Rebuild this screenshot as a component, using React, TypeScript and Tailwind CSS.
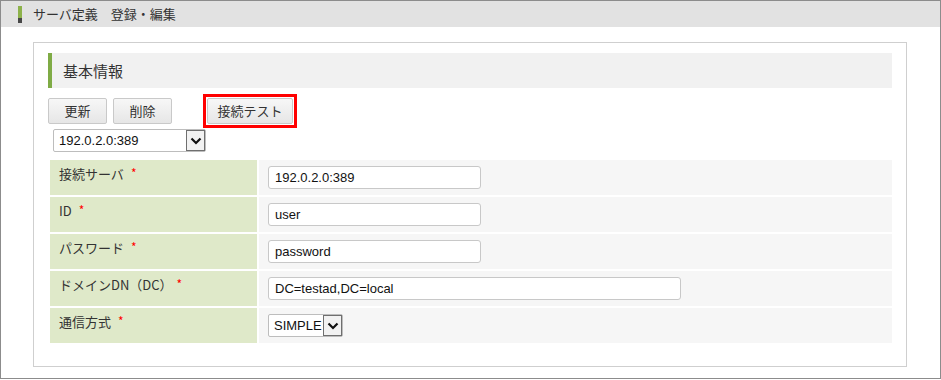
import React from "react";

const jp = "font-['Noto_Sans_CJK_JP','Noto_Sans',sans-serif]";
const ar = "font-['Liberation_Sans',Arial,sans-serif]";

function Chevron() {
  return (
    <svg width="12" height="8" viewBox="0 0 12 8">
      <path d="M1.5 1.5 L6 6 L10.5 1.5" fill="none" stroke="#111" strokeWidth="2.2" />
    </svg>
  );
}

function FakeSelect({ value, w }: { value: string; w: string }) {
  return (
    <div className={`${w} h-[23px] flex bg-white border border-[#bdbdbd] rounded-[2px]`}>
      <div className={`flex-1 flex items-center pl-[5px] text-[13px] text-[#111] ${ar}`}>{value}</div>
      <div className="w-[19px] h-full border border-[#6f6f6f] bg-[#f2f2f2] flex items-center justify-center">
        <Chevron />
      </div>
    </div>
  );
}

function Btn({ label }: { label: string }) {
  return (
    <div
      className={`h-[26px] flex items-center justify-center border border-[#c9c9c9] rounded-[2px] bg-[linear-gradient(#f7f7f7,#e6e6e6)] text-[13px] text-[#333] ${jp}`}
    >
      {label}
    </div>
  );
}

function Row({ label, children, extra }: { label: string; children: React.ReactNode; extra?: string }) {
  return (
    <div className="h-[35px] flex gap-[2px]">
      <div className={`w-[207px] bg-[#dfe9c9] pl-[9px] pt-[5px] text-[13px] leading-[18px] text-[#333] ${jp}`}>
        {label}
        <span className={`text-[#ff0000] text-[12px] relative -top-[1px] ${extra ?? "ml-[7px]"}`}>*</span>
      </div>
      <div className="flex-1 bg-[#f6f6f6] flex items-center pl-[9px]">{children}</div>
    </div>
  );
}

function Input({ value, w }: { value: string; w: string }) {
  return (
    <div
      className={`${w} h-[23px] flex items-center pl-[6px] bg-white border border-[#c8c8c8] rounded-[3px] text-[13px] text-[#111] ${ar}`}
    >
      {value}
    </div>
  );
}

export default function App() {
  return (
    <div className="w-[941px] h-[380px] bg-white">
      <div className="w-[941px] h-[379px] border border-[#8c8c8c] flex flex-col">
        <div className="h-[26px] bg-[#e2e2e2] flex items-center pl-[17px]">
          <div className="flex flex-col w-[4px]">
            <div className="h-[12px] bg-[#8db24a]" />
            <div className="h-[5px] bg-[#474747]" />
          </div>
          <div className={`ml-[11px] text-[13px] text-[#333] leading-[18px] ${jp}`}>サーバ定義　登録・編集</div>
        </div>
        <div className="ml-[32px] mt-[15px] w-[874px] h-[325px] border border-[#cfcfcf] px-[14px] pt-[10px]">
          <div className="h-[35px] bg-[#f1f1f1] flex items-center">
            <div className="w-[4px] h-full bg-[#7fab45]" />
            <div className={`ml-[11px] text-[15px] text-[#333] leading-[20px] ${jp}`}>基本情報</div>
          </div>
          <div className="mt-[6px] h-[34px] flex items-center">
            <div className="w-[59px]">
              <Btn label="更新" />
            </div>
            <div className="w-[59px] ml-[6px]">
              <Btn label="削除" />
            </div>
            <div className="ml-[31px] w-[94px] h-[34px] border-[3px] border-[#ff0000] p-[1px] flex items-center">
              <div className="w-full">
                <Btn label="接続テスト" />
              </div>
            </div>
          </div>
          <div className="mt-[1px] ml-[5px]">
            <FakeSelect value="192.0.2.0:389" w="w-[153px]" />
          </div>
          <div className="mt-[8px] ml-[2px] w-[842px] flex flex-col gap-[2px]">
            <Row label="接続サーバ">
              <Input value="192.0.2.0:389" w="w-[213px]" />
            </Row>
            <Row label="ID">
              <Input value="user" w="w-[213px]" />
            </Row>
            <Row label="パスワード">
              <Input value="password" w="w-[213px]" />
            </Row>
            <Row label="ドメインDN（DC）" extra="ml-[4px]">
              <Input value="DC=testad,DC=local" w="w-[413px]" />
            </Row>
            <Row label="通信方式">
              <FakeSelect value="SIMPLE" w="w-[75px]" />
            </Row>
          </div>
        </div>
      </div>
    </div>
  );
}
